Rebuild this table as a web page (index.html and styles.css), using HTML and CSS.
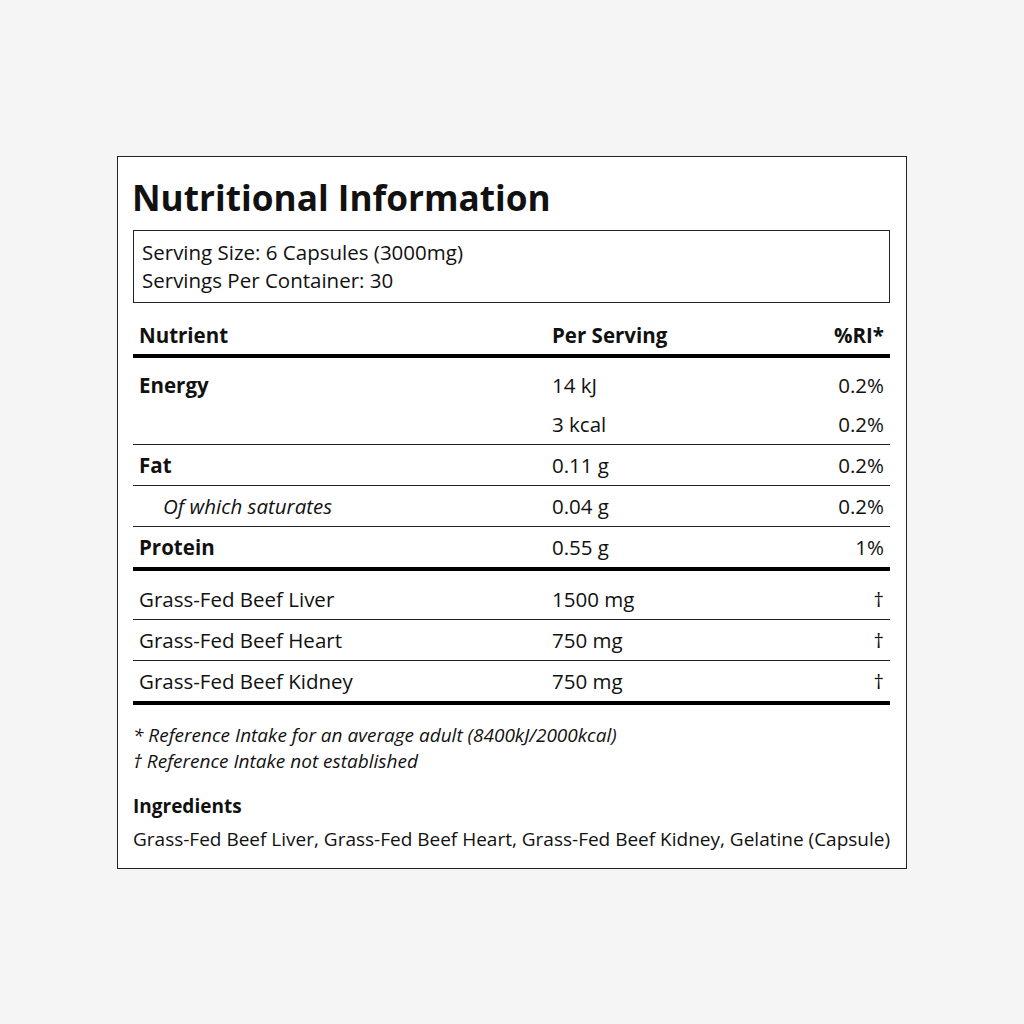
FILE: index.html
```html
<!DOCTYPE html>
<html lang="en">
<head>
<meta charset="utf-8">
<title>Nutritional Information</title>
<link rel="stylesheet" href="styles.css">
</head>
<body>
<main class="label">
  <h1 class="title">Nutritional Information</h1>
  <div class="serving">
    <div>Serving Size: 6 Capsules (3000mg)</div>
    <div>Servings Per Container: 30</div>
  </div>
  <table class="facts">
    <colgroup>
      <col class="c1">
      <col class="c2">
      <col class="c3">
    </colgroup>
    <thead>
      <tr>
        <th class="left">Nutrient</th>
        <th class="left">Per Serving</th>
        <th class="right">%RI*</th>
      </tr>
    </thead>
    <tbody>
      <tr class="first no-line">
        <td class="bold">Energy</td>
        <td>14 kJ</td>
        <td class="right">0.2%</td>
      </tr>
      <tr>
        <td></td>
        <td>3 kcal</td>
        <td class="right">0.2%</td>
      </tr>
      <tr>
        <td class="bold">Fat</td>
        <td>0.11 g</td>
        <td class="right">0.2%</td>
      </tr>
      <tr>
        <td class="sub">Of which saturates</td>
        <td>0.04 g</td>
        <td class="right">0.2%</td>
      </tr>
      <tr class="last">
        <td class="bold">Protein</td>
        <td>0.55 g</td>
        <td class="right">1%</td>
      </tr>
    </tbody>
    <tbody>
      <tr class="first second">
        <td>Grass-Fed Beef Liver</td>
        <td>1500 mg</td>
        <td class="right">†</td>
      </tr>
      <tr>
        <td>Grass-Fed Beef Heart</td>
        <td>750 mg</td>
        <td class="right">†</td>
      </tr>
      <tr class="last">
        <td>Grass-Fed Beef Kidney</td>
        <td>750 mg</td>
        <td class="right">†</td>
      </tr>
    </tbody>
  </table>
  <div class="notes">
    <p>* Reference Intake for an average adult (8400kJ/2000kcal)</p>
    <p>† Reference Intake not established</p>
  </div>
  <section class="ingredients">
    <h2>Ingredients</h2>
    <p>Grass-Fed Beef Liver, Grass-Fed Beef Heart, Grass-Fed Beef Kidney, Gelatine (Capsule)</p>
  </section>
</main>
</body>
</html>
```
FILE: styles.css
```css
html, body {
  margin: 0;
  padding: 0;
}
body {
  background: #f5f5f5;
  font-family: "Open Sans", "Liberation Sans", sans-serif;
  color: #111;
  min-height: 100vh;
  display: flex;
  align-items: center;
  justify-content: center;
}
.label {
  width: 757px;
  background: #fff;
  border: 1px solid #222;
  padding: 16px 16px 16px 15px;
}
.title {
  margin: 0 0 9px -1px;
  font-size: 35.2px;
  font-weight: 700;
  line-height: 48px;
}
.serving {
  border: 1px solid #222;
  padding: 7px 8px 8px 8px;
  font-size: 20.5px;
  line-height: 28px;
}
.facts {
  width: 100%;
  border-collapse: collapse;
  table-layout: fixed;
  margin-top: 12px;
  font-size: 20.5px;
  line-height: 28px;
}
.c1 { width: 413px; }
.c3 { width: 120px; }
.facts th {
  font-weight: 700;
  padding: 6px 6px 5px 6px;
  border-bottom: 4px solid #000;
}
.facts td {
  padding: 6px 6px;
  border-bottom: 1px solid #222;
}
.left { text-align: left; }
.right { text-align: right; }
.bold { font-weight: 700; }
.sub {
  font-style: italic;
  padding-left: 30px !important;
}
.facts tr.first td { padding-top: 13px; }
.facts tr.first.second td { padding-top: 14px; }
.facts tr.no-line td { border-bottom: none; padding-bottom: 5px; }
.facts tr.last td { border-bottom: 4px solid #000; }
.notes {
  margin-top: 17px;
  font-size: 19px;
  line-height: 26px;
  font-style: italic;
}
.notes p { margin: 0; }
.ingredients { margin-top: 19px; }
.ingredients h2 {
  margin: 0;
  font-size: 19px;
  font-weight: 700;
  line-height: 26px;
}
.ingredients p {
  margin: 7px 0 0 0;
  font-size: 19px;
  line-height: 26px;
  white-space: nowrap;
}
```
